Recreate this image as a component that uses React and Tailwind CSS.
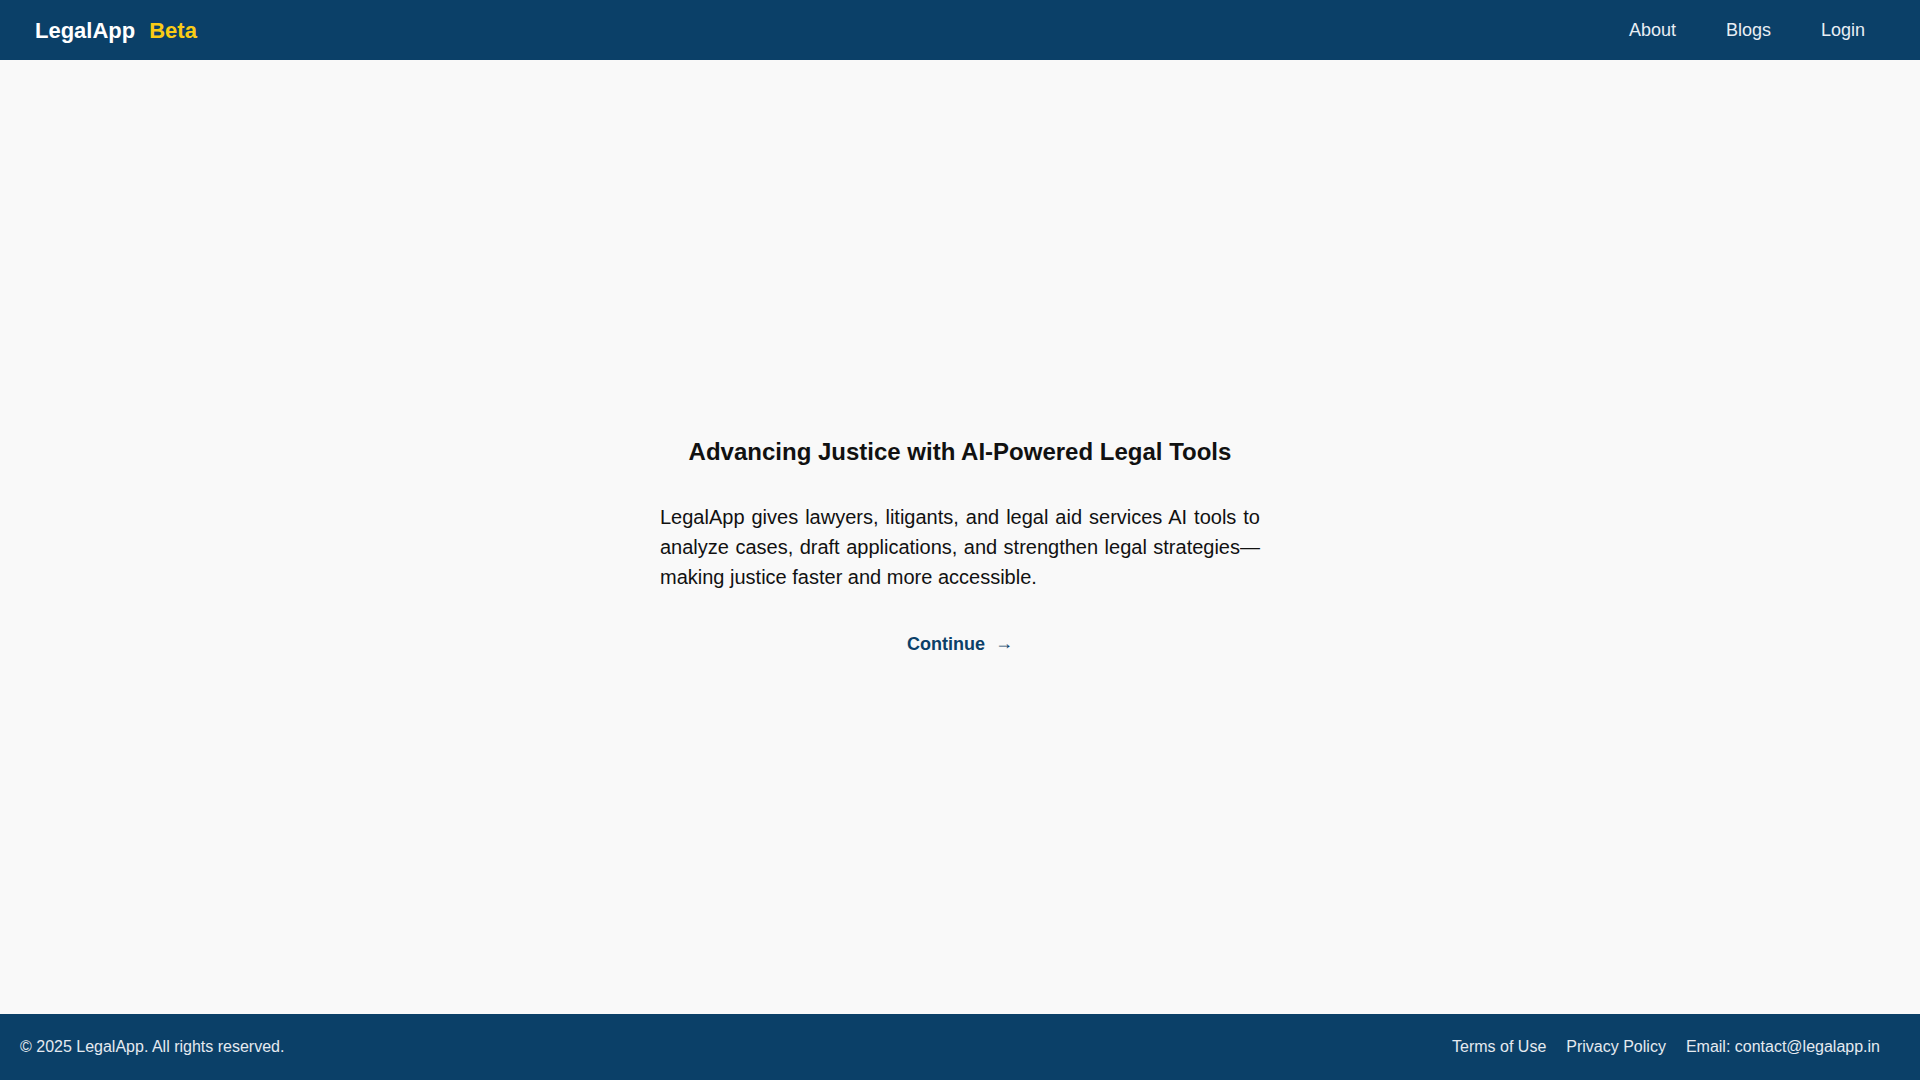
import React from "react";

const navLinks = ["About", "Blogs", "Login"];
const footerLinks = ["Terms of Use", "Privacy Policy", "Email: contact@legalapp.in"];

const App = () => {
  return (
    <div className="min-h-screen flex flex-col bg-[#f9f9f9] font-['Liberation_Sans',Arial,sans-serif]">
      {/* top bar */}
      <header className="h-[60px] bg-[#0b4068] flex items-center justify-between pl-[35px] pr-8">
        <div className="flex items-center text-[22px] font-bold">
          <span className="text-white">LegalApp</span>
          <span className="ml-3.5 text-[#facc15]">Beta</span>
        </div>
        <nav className="flex items-center">
          {navLinks.map((link) => (
            <a key={link} href="#" className="px-[25px] last:pr-[23px] text-[18px] text-[#e8eef4]">
              {link}
            </a>
          ))}
        </nav>
      </header>

      {/* hero */}
      <main className="flex-1 flex flex-col items-center justify-center pt-5">
        <h1 className="text-2xl font-bold text-[#111]">
          Advancing Justice with AI-Powered Legal Tools
        </h1>
        <p className="mt-[34px] w-[600px] text-[20px] leading-[30px] text-[#111] text-justify">
          LegalApp gives lawyers, litigants, and legal aid services AI tools to
          analyze cases, draft applications, and strengthen legal strategies—making
          justice faster and more accessible.
        </p>
        <a href="#" className="mt-[38px] text-lg font-bold text-[#0b4068] flex items-center">
          Continue
          <span className="ml-2.5 -translate-y-px">→</span>
        </a>
      </main>

      {/* footer */}
      <footer className="h-[66px] bg-[#0b4068] flex items-center justify-between pl-5 pr-10 text-base text-[#e5eaf0]">
        <span>© 2025 LegalApp. All rights reserved.</span>
        <div className="flex items-center gap-5">
          {footerLinks.map((link) => (
            <a key={link} href="#">
              {link}
            </a>
          ))}
        </div>
      </footer>
    </div>
  );
};

export default App;
